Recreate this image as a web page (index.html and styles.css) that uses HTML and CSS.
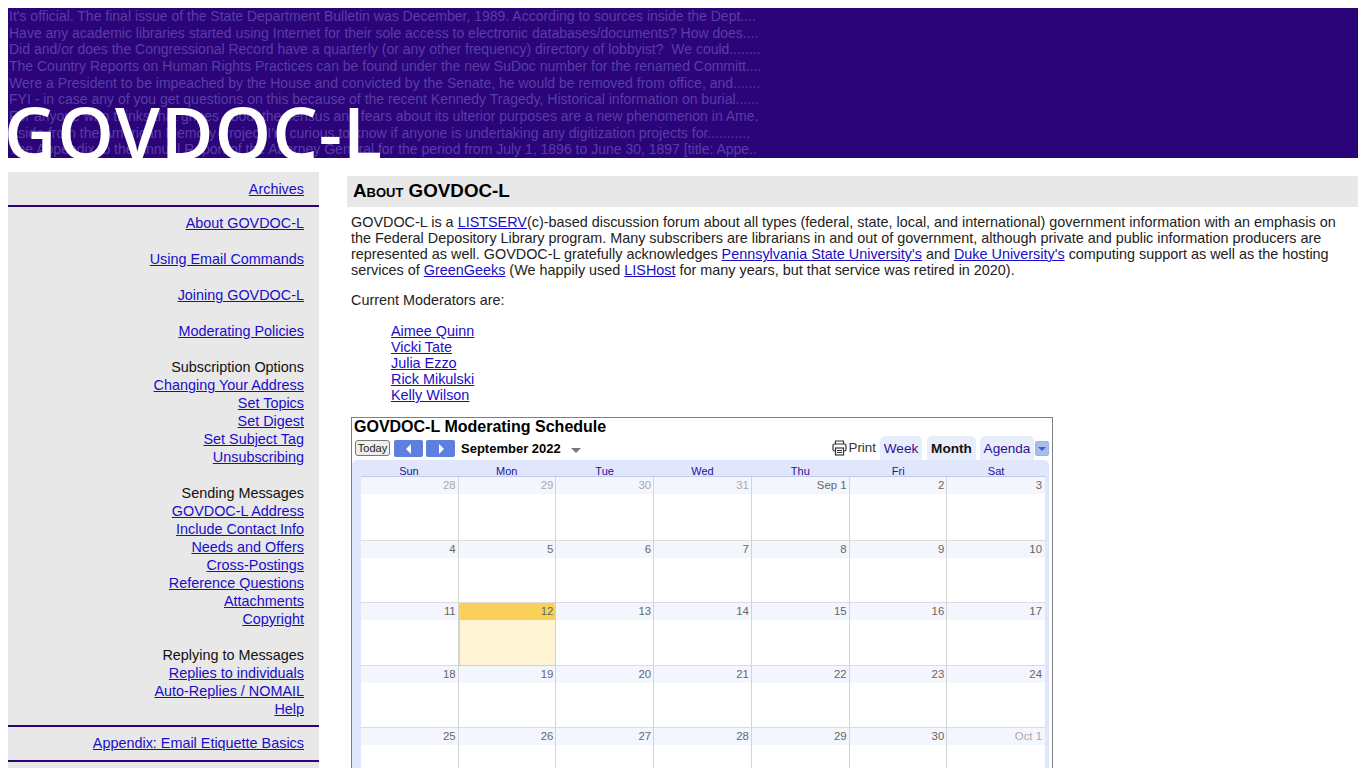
FILE: index.html
```html
<!DOCTYPE html>
<html lang="en">
<head>
  <meta charset="UTF-8">
  <title>GOVDOC-L</title>
  <link rel="stylesheet" href="styles.css">
</head>
<body>

  <!-- Banner -->
  <div class="banner">
    <div class="banner-lines">
      <div>It's official. The final issue of the State Department Bulletin was December, 1989. According to sources inside the Dept....</div>
      <div>Have any academic libraries started using Internet for their sole access to electronic databases/documents? How does....</div>
      <div>Did and/or does the Congressional Record have a quarterly (or any other frequency) directory of lobbyist?&nbsp; We could........</div>
      <div>The Country Reports on Human Rights Practices can be found under the new SuDoc number for the renamed Committ....</div>
      <div>Were a President to be impeached by the House and convicted by the Senate, he would be removed from office, and.......</div>
      <div>FYI - in case any of you get questions on this because of the recent Kennedy Tragedy, Historical information on burial......</div>
      <div>For anyone who thinks that gripes about the census and fears about its ulterior purposes are a new phenomenon in Ame.</div>
      <div>Aside from the American Memory Project I'm curious to know if anyone is undertaking any digitization projects for...........</div>
      <div>The Appendix to the Annual Report of the Attorney General for the period from July 1, 1896 to June 30, 1897 [title: Appe..</div>
    </div>
    <div class="banner-title">GOVDOC-L</div>
  </div>

  <div class="page">
    <!-- Sidebar -->
    <div class="sidebar">
      <div class="side-section first">
        <a href="#">Archives</a>
      </div>
      <div class="side-section">
        <div class="side-group"><a href="#">About GOVDOC-L</a></div>
        <div class="side-group"><a href="#">Using Email Commands</a></div>
        <div class="side-group"><a href="#">Joining GOVDOC-L</a></div>
        <div class="side-group"><a href="#">Moderating Policies</a></div>
        <div class="side-group">
          Subscription Options<br>
          <a href="#">Changing Your Address</a><br>
          <a href="#">Set Topics</a><br>
          <a href="#">Set Digest</a><br>
          <a href="#">Set Subject Tag</a><br>
          <a href="#">Unsubscribing</a>
        </div>
        <div class="side-group">
          Sending Messages<br>
          <a href="#">GOVDOC-L Address</a><br>
          <a href="#">Include Contact Info</a><br>
          <a href="#">Needs and Offers</a><br>
          <a href="#">Cross-Postings</a><br>
          <a href="#">Reference Questions</a><br>
          <a href="#">Attachments</a><br>
          <a href="#">Copyright</a>
        </div>
        <div class="side-group">
          Replying to Messages<br>
          <a href="#">Replies to individuals</a><br>
          <a href="#">Auto-Replies / NOMAIL</a><br>
          <a href="#">Help</a>
        </div>
      </div>
      <div class="side-section last">
        <a href="#">Appendix: Email Etiquette Basics</a>
      </div>
    </div>

    <!-- Main content -->
    <div class="content">
      <h2>About GOVDOC-L</h2>
      <p>GOVDOC-L is a <a href="#">LISTSERV</a>(c)-based discussion forum about all types (federal, state, local, and international) government information with an emphasis on the Federal Depository Library program. Many subscribers are librarians in and out of government, although private and public information producers are represented as well. GOVDOC-L gratefully acknowledges <a href="#">Pennsylvania State University's</a> and <a href="#">Duke University's</a> computing support as well as the hosting services of <a href="#">GreenGeeks</a> (We happily used <a href="#">LISHost</a> for many years, but that service was retired in 2020).</p>
      <p>Current Moderators are:</p>
      <ul class="mods">
        <li><a href="#">Aimee Quinn</a></li>
        <li><a href="#">Vicki Tate</a></li>
        <li><a href="#">Julia Ezzo</a></li>
        <li><a href="#">Rick Mikulski</a></li>
        <li><a href="#">Kelly Wilson</a></li>
      </ul>

      <!-- Calendar embed -->
      <div class="cal">
        <div class="cal-title">GOVDOC-L Moderating Schedule</div>
        <div class="cal-bar">
          <button class="today-btn">Today</button>
          <span class="nav-btn"><svg width="6" height="10" viewBox="0 0 6 10"><path d="M5 0v10L0 5z" fill="#fff"/></svg></span>
          <span class="nav-btn"><svg width="6" height="10" viewBox="0 0 6 10"><path d="M1 0v10l5-5z" fill="#fff"/></svg></span>
          <span class="cal-month">September 2022</span>
          <span class="month-arrow"></span>
          <span class="print">
            <svg width="15" height="16" viewBox="0 0 15 16" fill="none" stroke="#333" stroke-width="1.2">
              <path d="M3.5 4V1h8v3"/>
              <rect x="1" y="4" width="13" height="7" rx="1.5"/>
              <rect x="3.5" y="8" width="8" height="7" fill="#fff"/>
              <path d="M5 10.5h5M5 12.5h5"/>
            </svg>
            Print
          </span>
          <span class="cal-tab tab-week">Week</span>
          <span class="cal-tab tab-month">Month</span>
          <span class="cal-tab tab-agenda">Agenda</span>
          <span class="tab-menu"></span>
        </div>
        <div class="cal-body">
          <div class="cal-head">
            <span>Sun</span><span>Mon</span><span>Tue</span><span>Wed</span><span>Thu</span><span>Fri</span><span>Sat</span>
          </div>
          <div class="cal-grid">
            <div class="day other">28</div><div class="day other">29</div><div class="day other">30</div><div class="day other">31</div><div class="day">Sep 1</div><div class="day">2</div><div class="day">3</div>
            <div class="day">4</div><div class="day">5</div><div class="day">6</div><div class="day">7</div><div class="day">8</div><div class="day">9</div><div class="day">10</div>
            <div class="day">11</div><div class="day today">12</div><div class="day">13</div><div class="day">14</div><div class="day">15</div><div class="day">16</div><div class="day">17</div>
            <div class="day">18</div><div class="day">19</div><div class="day">20</div><div class="day">21</div><div class="day">22</div><div class="day">23</div><div class="day">24</div>
            <div class="day">25</div><div class="day">26</div><div class="day">27</div><div class="day">28</div><div class="day">29</div><div class="day">30</div><div class="day other">Oct 1</div>
          </div>
        </div>
      </div>
    </div>
  </div>

</body>
</html>
```

FILE: styles.css
```css
html {
  overflow: hidden;
}

body {
  font-family: "Liberation Sans", Arial, sans-serif;
  font-size: 14.4px;
  margin: 8px;
  color: #222;
}

a {
  color: #1a0dc8;
}

/* Banner */
.banner {
  position: relative;
  height: 150px;
  overflow: hidden;
  background-color: #2b0479;
}

.banner-lines {
  padding-left: 1px;
  color: #5a3da6;
  font-size: 14px;
  line-height: 16.67px;
  white-space: nowrap;
}

.banner-title {
  position: absolute;
  left: -4px;
  top: 84px;
  color: #fff;
  font-family: "Open Sans", sans-serif;
  font-size: 72px;
  font-weight: 600;
  letter-spacing: 1px;
  line-height: 80px;
  white-space: nowrap;
}

.page {
  display: flex;
  gap: 28px;
  margin-top: 14px;
}

/* Sidebar */
.sidebar {
  width: 311px;
  flex-shrink: 0;
  background-color: #e8e8e8;
  text-align: right;
  line-height: 18px;
  color: #111;
}

.side-section {
  padding: 7px 15px;
  border-bottom: 2px solid #2b0479;
}

.side-section.first {
  padding-top: 8px;
}

.side-section.last {
  padding-bottom: 8px;
}

.side-group {
  margin-bottom: 18px;
}

.side-group:last-child {
  margin-bottom: 0;
}

/* Main content */
.content {
  flex: 1;
  min-width: 0;
  padding-top: 4px;
  line-height: 16px;
}

.content h2 {
  margin: 0 0 7px;
  padding: 0 6px;
  height: 31px;
  line-height: 30px;
  background-color: #e8e8e8;
  color: #000;
  font-size: 18.8px;
  font-variant: small-caps;
}

.content p {
  margin: 0 4px 14px;
}

.mods {
  list-style: none;
  margin: 15px 0 14px;
  padding-left: 44px;
}

/* Calendar */
.cal {
  width: 700px;
  margin-left: 4px;
  height: 420px;
  border: 1px solid #808080;
  font-size: 13px;
  color: #000;
}

.cal-title {
  font-size: 16px;
  font-weight: bold;
  line-height: 18px;
  padding-left: 2px;
}

.cal-bar {
  display: flex;
  align-items: flex-end;
  height: 24px;
  padding: 0 3px;
}

.today-btn {
  width: 35px;
  height: 16px;
  margin: 0 4px 4px 0;
  padding: 0;
  border: 1px solid #777;
  border-radius: 3px;
  background-color: #eee;
  font-family: inherit;
  font-size: 11px;
  color: #222;
}

.nav-btn {
  display: flex;
  align-items: center;
  justify-content: center;
  width: 29px;
  height: 17px;
  margin: 0 3px 3px 0;
  border-radius: 2px;
  background-color: #5c7fe0;
}

.cal-month {
  margin: 0 10px 3px 3px;
  font-size: 13px;
  font-weight: bold;
}

.month-arrow {
  width: 0;
  height: 0;
  margin-bottom: 7px;
  border-left: 5px solid transparent;
  border-right: 5px solid transparent;
  border-top: 5px solid #777;
}

.print {
  display: flex;
  align-items: center;
  gap: 1px;
  margin: 0 4px 4px auto;
  font-size: 13.4px;
  color: #333;
}

.cal-tab {
  display: flex;
  align-items: center;
  justify-content: center;
  box-sizing: border-box;
  height: 24px;
  padding-top: 2px;
  margin-right: 5px;
  border-radius: 5px 5px 0 0;
  background-color: #e8edfb;
  color: #2b0f9c;
  font-size: 13.6px;
}

.tab-week { width: 42px; }
.tab-month { width: 49px; color: #111; font-weight: bold; margin-right: 4px; }
.tab-agenda { width: 54px; margin-right: 1px; }

.tab-menu {
  position: relative;
  width: 12px;
  height: 13px;
  margin-bottom: 4px;
  border: 1px solid #9db0e8;
  border-radius: 2px;
  background-color: #a9bcec;
}

/* small triangle on the agenda menu */
.tab-menu::after {
  content: "";
  position: absolute;
  left: 2px;
  top: 5px;
  border-left: 4px solid transparent;
  border-right: 4px solid transparent;
  border-top: 4px solid #3a5fc8;
}

.cal-body {
  margin-right: 3px;
  padding: 4px 4px 0 8px;
  border-radius: 5px 5px 0 0;
  background-color: #e0e6fb;
}

.cal-head {
  display: grid;
  grid-template-columns: repeat(7, 1fr);
  height: 12px;
  line-height: 14px;
  text-align: center;
  font-size: 11px;
  color: #2b0f9c;
}

.cal-grid {
  display: grid;
  grid-template-columns: repeat(7, 1fr);
  grid-template-rows: 63.5px;
  grid-auto-rows: 62.5px;
  margin-left: 1px;
  background-color: #fff;
  border-top: 1px solid #c3cbe8;
}

.day {
  height: 100%;
  padding-right: 2px;
  border-right: 1px solid #d4d4d4;
  border-bottom: 1px solid #dcdcdc;
  background: linear-gradient(#f4f6fd 17px, #fff 17px);
  box-sizing: border-box;
  text-align: right;
  font-size: 11.4px;
  line-height: 16px;
  color: #666;
}

.day:nth-child(7n) {
  padding-right: 3px;
  border-right: 0;
}

.day.other {
  color: #aaa;
}

.day.today {
  border: 1px solid #f4d36e;
  border-top: 0;
  background: linear-gradient(#fbd058 17px, #fff4d4 17px);
}
```
